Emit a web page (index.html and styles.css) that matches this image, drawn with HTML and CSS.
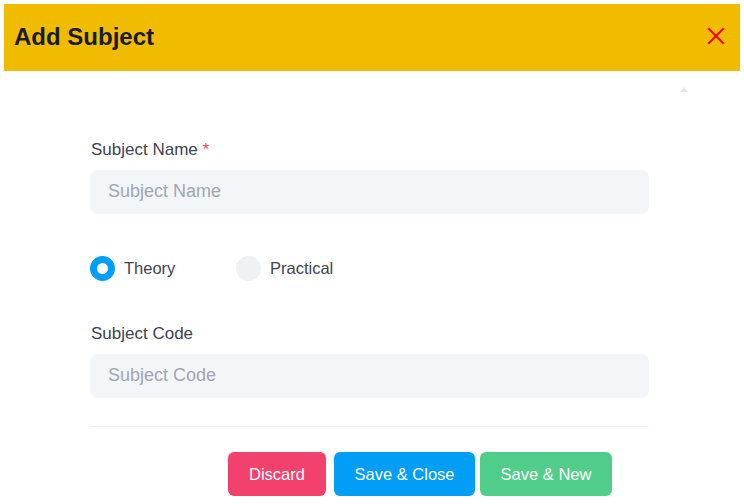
FILE: index.html
```html
<!DOCTYPE html>
<html>
<head>
<meta charset="utf-8">
<link rel="stylesheet" href="styles.css">
</head>
<body>
<div class="modal">
  <div class="header">
    <h1 class="title">Add Subject</h1>
    <svg class="close" width="18" height="18" viewBox="0 0 18 18"><path d="M2 2L16 16M16 2L2 16" stroke="#f00a0a" stroke-width="2.2" stroke-linecap="square" fill="none"/></svg>
  </div>
  <div class="body">
    <div class="scroll-arrow"></div>
    <div class="form">
      <div class="field">
        <label class="label">Subject Name <span class="req">*</span></label>
        <div class="input">Subject Name</div>
      </div>
      <div class="radios">
        <div class="radio"><span class="dot checked"></span><span class="rlabel">Theory</span></div>
        <div class="radio"><span class="dot"></span><span class="rlabel">Practical</span></div>
      </div>
      <div class="field">
        <label class="label">Subject Code</label>
        <div class="input">Subject Code</div>
      </div>
      <div class="sep"></div>
      <div class="actions">
        <button class="btn discard">Discard</button>
        <button class="btn close-btn">Save &amp; Close</button>
        <button class="btn new">Save &amp; New</button>
      </div>
    </div>
  </div>
</div>
</body>
</html>
```
FILE: styles.css
```css
* { box-sizing: border-box; }
html, body { margin: 0; padding: 0; background: #fff; }
body { font-family: "Liberation Sans", Arial, sans-serif; }
.modal { padding: 4px 4px 0 4px; }
.header {
  background: #f1bc00;
  height: 67px;
  display: flex;
  align-items: center;
  justify-content: space-between;
  padding: 0 15px 0 10px;
}
.title {
  margin: 0;
  font-size: 24px;
  font-weight: bold;
  color: #181c32;
  padding-bottom: 2px;
}
.close { margin-bottom: 3px; }
.body { position: relative; padding: 0 91px 0 86px; }
.scroll-arrow {
  position: absolute;
  left: 676px;
  top: 16px;
  width: 0; height: 0;
  border-left: 4px solid transparent;
  border-right: 4px solid transparent;
  border-bottom: 5px solid #e4e8ee;
}
.form { padding-top: 68px; }
.field { display: flex; flex-direction: column; }
.label {
  font-size: 17px;
  color: #3f4254;
  margin-left: 1px;
  height: 19px;
  line-height: 19px;
  margin-top: 1px;
  margin-bottom: 11px;
}
.req { color: #f1416c; }
.input {
  height: 44px;
  background: #f3f6f9;
  border-radius: 8px;
  padding-left: 18px;
  padding-bottom: 2px;
  display: flex;
  align-items: center;
  font-size: 18px;
  color: #a1a5b7;
}
.radios {
  display: flex;
  margin-top: 42px;
  margin-bottom: 42px;
  height: 25px;
}
.radio { display: flex; align-items: center; width: 146px; }
.dot {
  width: 25px; height: 25px;
  border-radius: 50%;
  background: #eff2f5;
  display: inline-block;
}
.dot.checked {
  background: #fff;
  border: 7px solid #009ef7;
}
.rlabel { margin-left: 9px; font-size: 16.5px; color: #3f4254; padding-bottom: 1px; }
.sep { height: 1px; background: #eff2f5; margin-top: 28px; }
.actions { display: flex; padding-left: 138px; margin-top: 25px; }
.btn {
  height: 44px;
  border: none;
  border-radius: 6px;
  color: #fff;
  font-family: "Liberation Sans", Arial, sans-serif;
  font-size: 16.5px;
  padding: 0;
}
.discard { background: #f1416c; width: 98px; margin-right: 8px; }
.close-btn { background: #009ef7; width: 141px; margin-right: 5px; }
.new { background: #50cd89; width: 132px; }
```
